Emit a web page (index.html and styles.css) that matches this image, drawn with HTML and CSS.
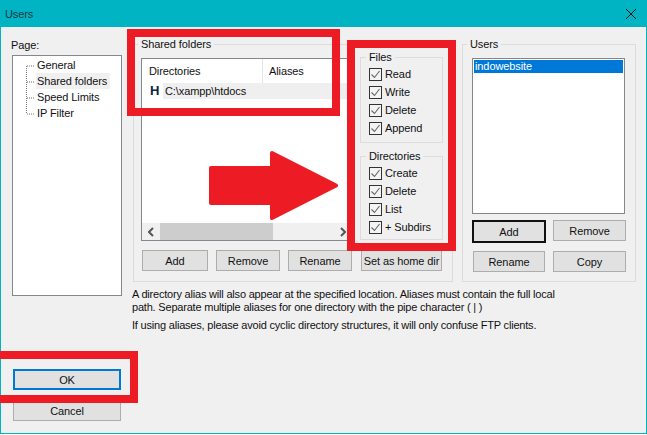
FILE: index.html
```html
<!DOCTYPE html>
<html lang="en">
<head>
<meta charset="utf-8">
<title>Users</title>
<link rel="stylesheet" href="styles.css">
</head>
<body>
<div class="window">
  <header class="titlebar">
    <span>Users</span>
    <svg class="close" width="12" height="12" viewBox="0 0 12 12"><path d="M1 1L11 11M11 1L1 11" stroke="#111" stroke-width="1" fill="none"/></svg>
  </header>
  <div class="content">
    <aside class="pagecol">
      <div class="pagelabel">Page:</div>
      <div class="tree">
        <svg class="treelines" width="10" height="57" viewBox="0 0 10 57"><path d="M0.5 1V49M1 1H9M1 17H9M1 33H9M1 49H9" stroke="#777" stroke-width="1" stroke-dasharray="1 1" fill="none"/></svg>
        <ul class="treeitems">
          <li>General</li>
          <li class="treesel">Shared folders</li>
          <li>Speed Limits</li>
          <li>IP Filter</li>
        </ul>
      </div>
      <div class="dialogbtns">
        <button class="btn ok">OK</button>
        <button class="btn">Cancel</button>
      </div>
    </aside>
    <main class="maincol">
      <div class="groups">
        <fieldset class="group shared">
          <legend>Shared folders</legend>
          <div class="sharedtop">
            <div class="dirlist">
              <div class="dirhead"><span class="coldir">Directories</span><span class="colalias">Aliases</span></div>
              <div class="dirrow"><b class="homeflag">H</b><span class="dirpath">C:\xampp\htdocs</span></div>
              <div class="hscroll">
                <svg width="6" height="10" viewBox="0 0 6 10"><path d="M5 1L1 5L5 9" stroke="#555" stroke-width="2" fill="none"/></svg>
                <div class="thumb"></div>
                <svg width="6" height="10" viewBox="0 0 6 10"><path d="M1 1L5 5L1 9" stroke="#555" stroke-width="2" fill="none"/></svg>
              </div>
            </div>
            <div class="perms">
              <fieldset class="group sub files">
                <legend>Files</legend>
                <label class="chk"><span class="box"><svg width="11" height="11" viewBox="0 0 11 11"><path d="M1.5 5.5L4.5 8.5L9.5 2" stroke="#666" stroke-width="1.1" fill="none"/></svg></span>Read</label>
                <label class="chk"><span class="box"><svg width="11" height="11" viewBox="0 0 11 11"><path d="M1.5 5.5L4.5 8.5L9.5 2" stroke="#666" stroke-width="1.1" fill="none"/></svg></span>Write</label>
                <label class="chk"><span class="box"><svg width="11" height="11" viewBox="0 0 11 11"><path d="M1.5 5.5L4.5 8.5L9.5 2" stroke="#666" stroke-width="1.1" fill="none"/></svg></span>Delete</label>
                <label class="chk"><span class="box"><svg width="11" height="11" viewBox="0 0 11 11"><path d="M1.5 5.5L4.5 8.5L9.5 2" stroke="#666" stroke-width="1.1" fill="none"/></svg></span>Append</label>
              </fieldset>
              <fieldset class="group sub">
                <legend>Directories</legend>
                <label class="chk"><span class="box"><svg width="11" height="11" viewBox="0 0 11 11"><path d="M1.5 5.5L4.5 8.5L9.5 2" stroke="#666" stroke-width="1.1" fill="none"/></svg></span>Create</label>
                <label class="chk"><span class="box"><svg width="11" height="11" viewBox="0 0 11 11"><path d="M1.5 5.5L4.5 8.5L9.5 2" stroke="#666" stroke-width="1.1" fill="none"/></svg></span>Delete</label>
                <label class="chk"><span class="box"><svg width="11" height="11" viewBox="0 0 11 11"><path d="M1.5 5.5L4.5 8.5L9.5 2" stroke="#666" stroke-width="1.1" fill="none"/></svg></span>List</label>
                <label class="chk"><span class="box"><svg width="11" height="11" viewBox="0 0 11 11"><path d="M1.5 5.5L4.5 8.5L9.5 2" stroke="#666" stroke-width="1.1" fill="none"/></svg></span>+ Subdirs</label>
              </fieldset>
            </div>
          </div>
          <div class="sharedbtns">
            <button class="btn b-add">Add</button>
            <button class="btn b-remove">Remove</button>
            <button class="btn b-rename">Rename</button>
            <button class="btn b-home">Set as home dir</button>
          </div>
        </fieldset>
        <fieldset class="group users">
          <legend>Users</legend>
          <div class="userlist"><div class="usersel">indowebsite</div></div>
          <div class="userbtns">
            <button class="btn default">Add</button>
            <button class="btn">Remove</button>
            <button class="btn u-rename">Rename</button>
            <button class="btn">Copy</button>
          </div>
        </fieldset>
      </div>
      <div class="notes">
        <p>A directory alias will also appear at the specified location. Aliases must contain the full local<br>path. Separate multiple aliases for one directory with the pipe character ( | )</p>
        <p>If using aliases, please avoid cyclic directory structures, it will only confuse FTP clients.</p>
      </div>
    </main>
  </div>
</div>
<div class="mark mark-shared"></div>
<div class="mark mark-perms"></div>
<div class="mark mark-ok"></div>
<svg class="arrow" width="647" height="435" viewBox="0 0 647 435"><path d="M211 168H272V153L336 185.5L272 218V203H211Z" fill="#ed1c24" stroke="#ed1c24" stroke-width="4" stroke-linejoin="round"/></svg>
</body>
</html>
```
FILE: styles.css
```css
* { box-sizing: border-box; }
html, body { margin: 0; padding: 0; }
body {
  width: 647px;
  height: 435px;
  position: relative;
  overflow: hidden;
  background: #fff;
  font-family: "Liberation Sans", Arial, sans-serif;
  font-size: 11px;
  line-height: 16px;
  letter-spacing: -0.1px;
  color: #111;
}
.window {
  width: 647px;
  height: 434px;
  border: 1px solid #00b4c4;
  display: flex;
  flex-direction: column;
  background: #f0f0f0;
}
.titlebar {
  height: 26px;
  flex: none;
  background: #00b4c4;
  padding: 0 9px 0 4px;
  display: flex;
  align-items: center;
  justify-content: space-between;
  color: #10383f;
}
.content { flex: 1; display: flex; min-height: 0; padding-bottom: 12px; }
.pagecol { width: 110px; margin-left: 11px; display: flex; flex-direction: column; flex: none; }
.pagelabel { padding-top: 10px; margin-bottom: 2px; margin-left: -1px; }
.tree {
  height: 241px;
  background: #fff;
  border: 1px solid #828790;
  padding: 1px 0 0 13px;
  display: flex;
  align-items: flex-start;
}
.treelines { margin-top: 8px; flex: none; }
.treeitems { list-style: none; margin: 0; padding: 0; }
.treeitems li { height: 16px; padding: 0 1px; white-space: nowrap; }
.treesel { background: #f0f0f0; width: 74px; }
.dialogbtns { margin-top: auto; display: flex; flex-direction: column; gap: 10px; padding: 0 1px; }
.btn {
  font: inherit;
  letter-spacing: inherit;
  color: #111;
  background: #e1e1e1;
  border: 1px solid #adadad;
  border-radius: 0;
  padding: 0;
  height: 21px;
  white-space: nowrap;
}
.ok { border: 2px solid #0078d7; }
.maincol { margin-left: 11px; flex: none; }
.groups { display: flex; gap: 9px; margin-top: 9px; }
.group { border: 1px solid #dcdcdc; margin: 0; min-width: 0; }
.group legend { padding: 0 3px; line-height: 16px; }
.shared { width: 320px; padding: 0 0 10px 7px; }
.shared > legend { margin-left: -3px; }
.sharedtop { display: flex; gap: 8px; align-items: flex-start; }
.dirlist {
  width: 211px;
  height: 183px;
  margin-top: 6px;
  border: 1px solid #828790;
  background: #fff;
  display: flex;
  flex-direction: column;
}
.dirhead { height: 24px; display: flex; align-items: center; flex: none; }
.coldir { width: 121px; padding-left: 7px; height: 24px; line-height: 24px; border-right: 1px solid #e5e5e5; }
.colalias { padding-left: 6px; }
.dirrow { height: 16px; display: flex; align-items: center; padding-left: 8px; flex: none; }
.homeflag { width: 13px; font-size: 13px; color: #0c2340; flex: none; }
.dirpath { flex: 1; background: #efefef; height: 16px; padding-left: 2px; }
.hscroll {
  margin-top: auto;
  height: 17px;
  background: #f0f0f0;
  display: flex;
  align-items: center;
  padding: 0 5px 0 6px;
  justify-content: space-between;
  gap: 6px;
}
.hscroll svg { flex: none; }
.thumb { width: 113px; height: 17px; background: #cdcdcd; margin-right: auto; }
.perms { width: 83px; margin-top: -3px; display: flex; flex-direction: column; gap: 5px; }
.sub { padding: 0 0 3px 8px; }
.files { padding-bottom: 5px; }
.group.sub legend { margin-left: -3px; }
.chk { display: flex; align-items: center; height: 18px; }
.box {
  width: 13px;
  height: 13px;
  border: 1px solid #333;
  background: #f4f4f4;
  margin-right: 3px;
  flex: none;
  display: flex;
}
.sharedbtns { display: flex; gap: 8px; margin: 9px 0 0 1px; }
.b-add { width: 66px; }
.b-remove, .b-rename { width: 64px; }
.b-home { width: 81px; margin-left: 1px; }
.users { width: 174px; padding: 6px 0 8px 9px; }
.users > legend { margin-left: -5px; }
.userlist {
  width: 153px;
  height: 156px;
  border: 1px solid #828790;
  background: #fff;
  padding: 1px;
}
.usersel { background: #0078d7; color: #fff; height: 13px; line-height: 13px; padding-left: 1px; }
.userbtns { display: grid; grid-template-columns: 74px 73px; gap: 8px 7px; margin-top: 6px; }
.default { border: 2px solid #111; height: 23px; }
.u-rename { margin: 0 1px; }
.notes { margin: 6px 0 0 -1px; white-space: nowrap; line-height: 13px; letter-spacing: -0.2px; }
.notes p { margin: 0 0 5px; }
.mark { position: absolute; border: 8px solid #ed1c24; }
.mark-shared { left: 127px; top: 29px; width: 213px; height: 87px; }
.mark-perms { left: 347px; top: 40px; width: 109px; height: 211px; }
.mark-ok { left: -8px; top: 351px; width: 146px; height: 52px; }
.arrow { position: absolute; left: 0; top: 0; pointer-events: none; }
```
